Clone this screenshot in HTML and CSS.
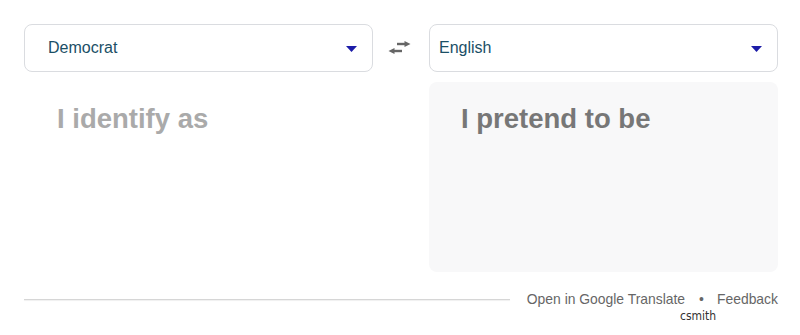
FILE: index.html
```html
<!DOCTYPE html>
<html>
<head>
<meta charset="utf-8">
<link rel="stylesheet" href="styles.css">
</head>
<body>
<div class="page">
  <div class="row">
    <div class="select src">
      <span class="lang">Democrat</span>
      <svg class="caret" width="11" height="6" viewBox="0 0 11 6"><path d="M0 0H11L5.5 6Z" fill="#1c1ca8"/></svg>
    </div>
    <div class="swap">
      <svg width="23" height="14" viewBox="0 0 23 14"><path d="M9 3H18" stroke="#666" stroke-width="2.4"/><path d="M16.5 0L22.5 3L16.5 6Z" fill="#666"/><path d="M14 10H5" stroke="#666" stroke-width="2.4"/><path d="M6.5 7L0.5 10L6.5 13Z" fill="#666"/></svg>
    </div>
    <div class="select dst">
      <span class="lang">English</span>
      <svg class="caret" width="11" height="6" viewBox="0 0 11 6"><path d="M0 0H11L5.5 6Z" fill="#1c1ca8"/></svg>
    </div>
  </div>
  <div class="row panels">
    <div class="panel input">I identify as</div>
    <div class="gap"></div>
    <div class="panel output">I pretend to be</div>
  </div>
  <div class="footer">
    <div class="rule"></div>
    <div class="links">
      <span>Open in Google Translate</span>
      <span class="dot">•</span>
      <span>Feedback</span>
    </div>
  </div>
  <div class="sig">csmith</div>
</div>
</body>
</html>
```
FILE: styles.css
```css
html, body { margin: 0; padding: 0; background: #fff; }
body { font-family: "Liberation Sans", Arial, sans-serif; }
.page { padding: 24px 22px 0 24px; width: 754px; }
.row { display: flex; }
.select {
  width: 349px; height: 48px; box-sizing: border-box;
  border: 1px solid #dadce0; border-radius: 8px;
  display: flex; align-items: center; justify-content: space-between;
  padding-right: 15px;
}
.select.src { padding-left: 23px; }
.select.dst { padding-left: 9px; }
.lang { font-size: 16px; color: #1b4f66; margin-top: 0; }
.caret { margin-top: 2px; }
.swap { width: 56px; display: flex; align-items: center; padding-left: 15px; box-sizing: border-box; }
.panels { margin-top: 10px; height: 190px; }
.gap { width: 56px; }
.panel { width: 349px; box-sizing: border-box; font-weight: bold; font-size: 27.5px; border-radius: 8px; }
.input { color: #aaaaaa; padding: 21px 0 0 33px; }
.output { color: #777777; background: #f8f8f9; padding: 21px 0 0 32px; }
.footer { display: flex; align-items: center; margin-top: 19px; }
.rule { width: 486px; height: 1px; background: #d6d6d6; box-shadow: 0 1px 1px #eee; }
.links { flex: 1; justify-content: flex-end; font-size: 13.9px; color: #666; display: flex; white-space: nowrap; }
.dot { margin: 0 13px 0 14px; }
.sig { margin-left: 656px; margin-top: 2px; font-family: "DejaVu Sans Condensed", "DejaVu Sans", sans-serif; font-size: 12px; color: #333; }
```
